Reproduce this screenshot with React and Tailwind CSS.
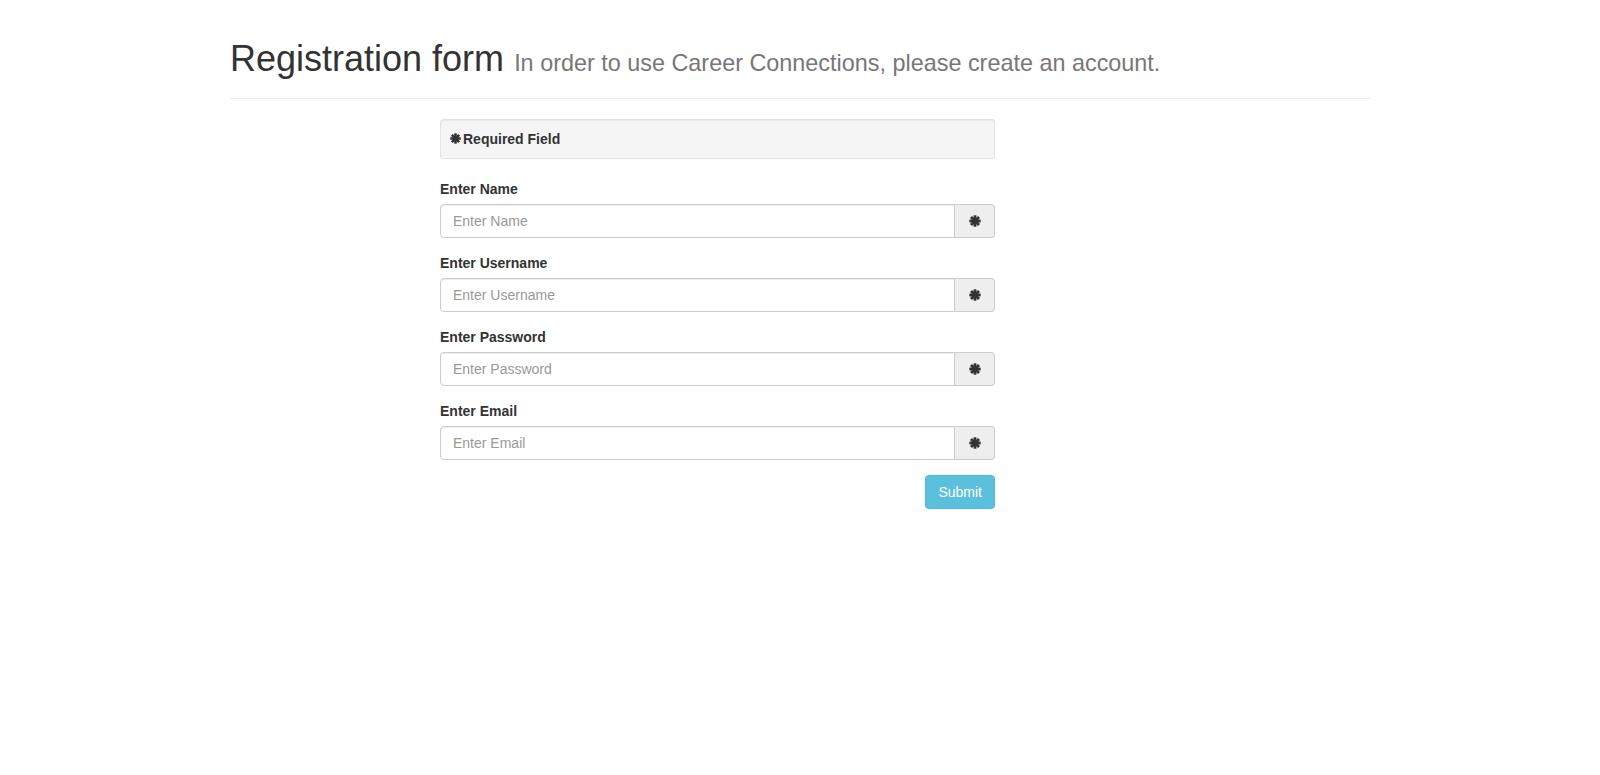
const Asterisk = ({ size = 12 }) => (
  <svg width={size} height={size} viewBox="0 0 12 12" className="inline-block">
    <g stroke="#333" strokeWidth="2.8" strokeLinecap="butt">
      <line x1="6" y1="0.3" x2="6" y2="11.7" />
      <line x1="0.3" y1="6" x2="11.7" y2="6" />
      <line x1="2" y1="2" x2="10" y2="10" />
      <line x1="10" y1="2" x2="2" y2="10" />
    </g>
  </svg>
);

const fields = [
  { id: "name", label: "Enter Name", type: "text" },
  { id: "username", label: "Enter Username", type: "text" },
  { id: "password", label: "Enter Password", type: "password" },
  { id: "email", label: "Enter Email", type: "email" },
];

const Field = ({ id, label, type }) => (
  <div className="mb-[15px]">
    <label
      htmlFor={id}
      className="block mb-[5px] text-[14px] leading-[20px] font-bold text-[#333]"
    >
      {label}
    </label>
    <div className="flex">
      <input
        id={id}
        type={type}
        placeholder={label}
        className="flex-1 h-[34px] px-3 py-[6px] text-[14px] text-[#555] bg-white border border-[#ccc] rounded-l-[4px] shadow-[inset_0_1px_1px_rgba(0,0,0,0.075)] placeholder:text-[#999] outline-none"
      />
      <span className="w-[40px] h-[34px] flex items-center justify-center bg-[#eee] border border-l-0 border-[#ccc] rounded-r-[4px]">
        <Asterisk />
      </span>
    </div>
  </div>
);

export default function App() {
  return (
    <div className="min-h-screen bg-white font-['Liberation_Sans',Arial,sans-serif] text-[#333] text-[14px] leading-[20px]">
      <div className="w-[1170px] mx-auto px-[15px] pt-[39px]">
        <div className="pb-[9px] mb-[20px] border-b border-[#eee]">
          <h1 className="text-[36px] leading-[1.1] mb-[10px] font-normal">
            Registration form{" "}
            <small className="text-[23.4px] text-[#777] font-normal">
              In order to use Career Connections, please create an account.
            </small>
          </h1>
        </div>
        <form className="ml-[210px] w-[555px]" onSubmit={(e) => e.preventDefault()}>
          <div className="mb-[20px] p-[9px] bg-[#f5f5f5] border border-[#e3e3e3] rounded-[3px] shadow-[inset_0_1px_1px_rgba(0,0,0,0.05)] flex items-center gap-[2px] font-bold">
            <Asterisk size={11} />
            <span>Required Field</span>
          </div>
          {fields.map((f) => (
            <Field key={f.id} {...f} />
          ))}
          <div className="flex justify-end">
            <button
              type="submit"
              className="h-[34px] px-3 text-[14px] text-white bg-[#5bc0de] border border-[#46b8da] rounded-[4px]"
            >
              Submit
            </button>
          </div>
        </form>
      </div>
    </div>
  );
}
